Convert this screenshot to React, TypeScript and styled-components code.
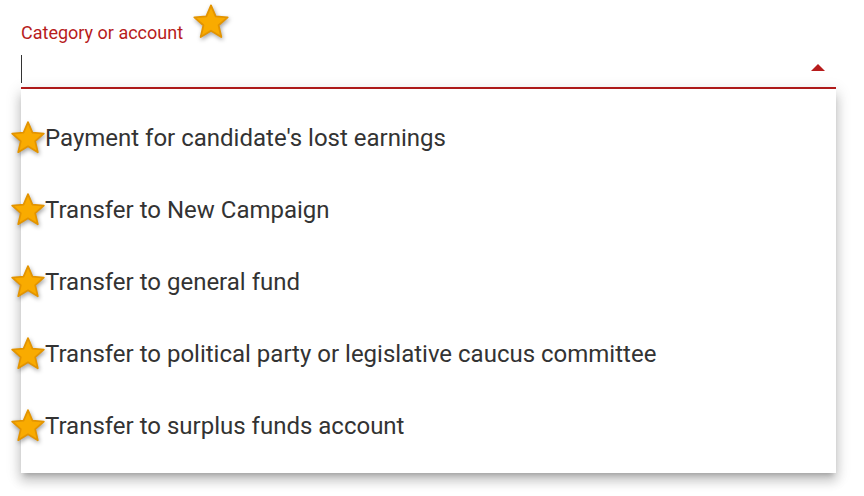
import styled, { createGlobalStyle } from "styled-components";

const GlobalStyle = createGlobalStyle`
  html, body {
    margin: 0;
    padding: 0;
    background: #ffffff;
    font-family: Roboto, "Noto Sans", sans-serif;
  }
`;

const categories = [
  "Payment for candidate's lost earnings",
  "Transfer to New Campaign",
  "Transfer to general fund",
  "Transfer to political party or legislative caucus committee",
  "Transfer to surplus funds account",
];

const Page = styled.div`
  width: 864px;
  height: 496px;
  padding: 0 28px 0 21px;
  box-sizing: border-box;
  overflow: hidden;
`;

const Field = styled.div`
  display: flex;
  flex-direction: column;
`;

const LabelRow = styled.div`
  display: flex;
  align-items: flex-start;
  height: 46px;
`;

const Label = styled.label`
  margin-top: 22px;
  font-size: 18px;
  line-height: 22px;
  color: #b71c1c;
`;

const InputRow = styled.div`
  display: flex;
  align-items: center;
  justify-content: space-between;
  height: 41px;
  border-bottom: 2px solid #b71c1c;
`;

const Caret = styled.span`
  width: 1px;
  height: 28px;
  margin-top: 4px;
  background: #333;
`;

const Arrow = styled.span`
  width: 0;
  height: 0;
  margin-right: 11px;
  margin-top: 2px;
  border-left: 7px solid transparent;
  border-right: 7px solid transparent;
  border-bottom: 7px solid #b71c1c;
`;

const Menu = styled.ul`
  list-style: none;
  margin: 0;
  padding: 13px 0 11px;
  background: #fff;
  box-shadow: 0 5px 5px -3px rgba(0, 0, 0, 0.2), 0 8px 10px 1px rgba(0, 0, 0, 0.14),
    0 3px 14px 2px rgba(0, 0, 0, 0.12);
`;

const Item = styled.li`
  display: flex;
  align-items: center;
  height: 72px;
  font-size: 24px;
  color: #333;
`;

const StarIcon = styled.svg<{ $size: number; $left: number; $right?: number; $top?: number }>`
  flex: none;
  width: ${({ $size }) => $size}px;
  height: ${({ $size }) => $size}px;
  margin: ${({ $top }) => $top ?? 0}px ${({ $right }) => $right ?? 0}px 0
    ${({ $left }) => $left}px;
  filter: drop-shadow(1px 2px 2px rgba(0, 0, 0, 0.35));
`;

type StarProps = { size: number; left: number; right?: number; top?: number };

function Star({ size, left, right, top }: StarProps) {
  return (
    <StarIcon $size={size} $left={left} $right={right} $top={top} viewBox="0 0 24 24">
      <path
        d="M12 17.27L18.18 21l-1.64-7.03L22 9.24l-7.19-.61L12 2 9.19 8.63 2 9.24l5.46 4.73L5.82 21z"
        fill="#f9ab00"
        stroke="#e39400"
        strokeWidth="1.1"
        strokeLinejoin="round"
      />
    </StarIcon>
  );
}

export default function App() {
  return (
    <>
      <GlobalStyle />
      <Page>
        <Field>
          <LabelRow>
            <Label>Category or account</Label>
            <Star size={40} left={8} top={2} />
          </LabelRow>
          <InputRow>
            <Caret />
            <Arrow />
          </InputRow>
          <Menu>
            {categories.map(c => (
              <Item key={c}>
                <Star size={38} left={-12} right={-2} />
                {c}
              </Item>
            ))}
          </Menu>
        </Field>
      </Page>
    </>
  );
}
